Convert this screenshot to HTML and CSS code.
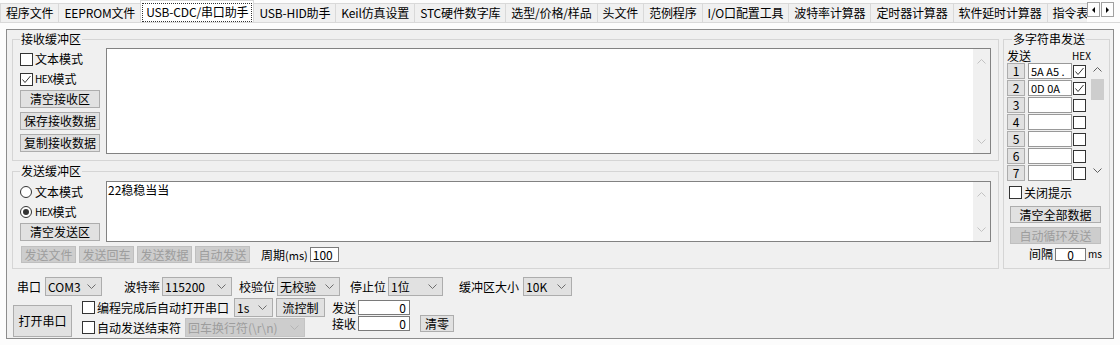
FILE: index.html
```html
<!DOCTYPE html>
<html lang="zh-CN">
<head>
	<meta charset="UTF-8">
	<title>USB-CDC/串口助手</title>
	<link rel="stylesheet" href="styles.css">
</head>
<body>
	<svg class="defs" width="0" height="0">
		<symbol id="dn" viewBox="0 0 9 5"><path d="M.5 .5 4.5 4.5 8.5 .5" fill="none" stroke="currentColor"/></symbol>
		<symbol id="up" viewBox="0 0 9 5"><path d="M.5 4.5 4.5 .5 8.5 4.5" fill="none" stroke="currentColor"/></symbol>
		<symbol id="ck" viewBox="0 0 11 11"><path d="M1.5 5.5 4 8.5 9.5 2" fill="none" stroke="currentColor"/></symbol>
	</svg>

	<div class="tabbar">
		<ul class="tabs">
			<li>程序文件</li>
			<li>EEPROM文件</li>
			<li class="cur"><span>USB-CDC/串口助手</span></li>
			<li>USB-HID助手</li>
			<li>Keil仿真设置</li>
			<li>STC硬件数字库</li>
			<li>选型/价格/样品</li>
			<li>头文件</li>
			<li>范例程序</li>
			<li>I/O口配置工具</li>
			<li>波特率计算器</li>
			<li>定时器计算器</li>
			<li>软件延时计算器</li>
			<li>指令表</li>
		</ul>
		<div class="spin"><span class="sl"></span><span class="sr"></span></div>
	</div>

	<div class="page">
		<div class="panel">
			<div class="upper">
				<div class="bufs">
					<fieldset class="grp recv">
						<legend>接收缓冲区</legend>
						<div class="gbody">
							<div class="side">
								<label class="chk"><i class="box"></i>文本模式</label>
								<label class="chk"><i class="box"><svg><use href="#ck"/></svg></i><span class="lat">HEX</span>模式</label>
								<button class="btn">清空接收区</button>
								<button class="btn">保存接收数据</button>
								<button class="btn">复制接收数据</button>
							</div>
							<div class="edit rx">
								<div class="txt"></div>
								<div class="vbar"><svg><use href="#up"/></svg><svg><use href="#dn"/></svg></div>
							</div>
						</div>
					</fieldset>

					<fieldset class="grp send">
						<legend>发送缓冲区</legend>
						<div class="gbody">
							<div class="side">
								<label class="chk"><i class="radio"></i>文本模式</label>
								<label class="chk"><i class="radio on"></i><span class="lat">HEX</span>模式</label>
								<button class="btn">清空发送区</button>
							</div>
							<div class="edit tx">
								<div class="txt">22稳稳当当</div>
								<div class="vbar"><svg><use href="#up"/></svg><svg><use href="#dn"/></svg></div>
							</div>
						</div>
						<div class="sendrow">
							<button class="btn off">发送文件</button>
							<button class="btn off">发送回车</button>
							<button class="btn off">发送数据</button>
							<button class="btn off">自动发送</button>
							<span class="period">周期<small>(ms)</small></span>
							<span class="ipt cyc">100</span>
						</div>
					</fieldset>
				</div>

				<fieldset class="grp multi">
					<legend>多字符串发送</legend>
					<div class="mhead"><span>发送</span><span class="hex">HEX</span></div>
					<div class="mlist">
						<div class="mrows">
							<div class="mrow"><button class="num">1</button><span class="mval">5A A5 .</span><i class="box"><svg><use href="#ck"/></svg></i></div>
							<div class="mrow"><button class="num">2</button><span class="mval">0D 0A</span><i class="box"><svg><use href="#ck"/></svg></i></div>
							<div class="mrow"><button class="num">3</button><span class="mval"></span><i class="box"></i></div>
							<div class="mrow"><button class="num">4</button><span class="mval"></span><i class="box"></i></div>
							<div class="mrow"><button class="num">5</button><span class="mval"></span><i class="box"></i></div>
							<div class="mrow"><button class="num">6</button><span class="mval"></span><i class="box"></i></div>
							<div class="mrow"><button class="num">7</button><span class="mval"></span><i class="box"></i></div>
						</div>
						<div class="mscroll">
							<svg><use href="#up"/></svg>
							<span class="thumb"></span>
							<svg><use href="#dn"/></svg>
						</div>
					</div>
					<label class="chk close"><i class="box"></i>关闭提示</label>
					<button class="btn wide">清空全部数据</button>
					<button class="btn wide off">自动循环发送</button>
					<div class="interval">间隔<span class="ipt gap-ipt">0</span><small>ms</small></div>
				</fieldset>
			</div>

			<div class="port">
				<div class="prow">
					<span>串口</span><span class="sel s-com">COM3<svg><use href="#dn"/></svg></span>
					<span class="lb-baud">波特率</span><span class="sel s-baud">115200<svg><use href="#dn"/></svg></span>
					<span class="lb-par">校验位</span><span class="sel s-par">无校验<svg><use href="#dn"/></svg></span>
					<span class="lb-stop">停止位</span><span class="sel s-stop">1位<svg><use href="#dn"/></svg></span>
					<span class="lb-buf">缓冲区大小</span><span class="sel s-buf">10K<svg><use href="#dn"/></svg></span>
				</div>
				<div class="pmain">
					<button class="btn open">打开串口</button>
					<div class="opts">
						<div class="ln">
							<label class="chk"><i class="box"></i>编程完成后自动打开串口</label>
							<span class="sel s-delay">1s<svg><use href="#dn"/></svg></span>
							<button class="btn flow">流控制</button>
						</div>
						<div class="ln">
							<label class="chk"><i class="box"></i>自动发送结束符</label>
							<span class="sel off s-eol">回车换行符(\r\n)<svg><use href="#dn"/></svg></span>
						</div>
					</div>
					<div class="cnt">
						<div class="c1">发送<span class="ipt ctr">0</span></div>
						<div class="c2">接收<span class="ipt ctr">0</span><button class="btn zero">清零</button></div>
					</div>
				</div>
			</div>
		</div>
	</div>
</body>
</html>
```

FILE: styles.css
```css
*{
	margin: 0;
	padding: 0;
	box-sizing: border-box;
}
body{
	width: 1120px;
	height: 345px;
	overflow: hidden;
	background: #fcfcfc;
	color: #000;
	font: 12px/14px "Noto Sans CJK SC", "Noto Sans", sans-serif;
}
button{
	font: inherit;
	color: inherit;
}
.defs{
	position: absolute;
	width: 0;
	height: 0;
}

/* tab strip */
.tabbar{
	display: flex;
	height: 22px;
}
.tabs{
	list-style: none;
	display: flex;
	align-items: flex-end;
	width: 1087px;
	overflow: hidden;
}
.tabs li{
	flex: none;
	height: 19px;
	padding: 2px 5px 0;
	background: #f0f0f0;
	border: 1px solid #d9d9d9;
	border-width: 1px 1px 0 0;
	white-space: nowrap;
	letter-spacing: -.15px;
}
.tabs li:first-child{
	border-left-width: 1px;
}
.tabs li.cur{
	height: 22px;
	padding: 3px 2px 0;
	margin-left: -1px;
	border-left-width: 1px;
	background: #fff;
}
.tabs li.cur span{
	display: block;
	padding: 1px 3px 2px;
	outline: 1px dotted #333;
}
.spin{
	display: flex;
	gap: 1px;
	height: 15px;
	margin-top: 2px;
}
.spin span{
	width: 13px;
	border: 1px solid #a0a0a0;
	background: #fdfdfd;
	display: flex;
	align-items: center;
	justify-content: center;
}
.spin span::before{
	content: "";
	border: 3px solid transparent;
}
.spin .sl::before{
	border-right-color: #000;
	border-left-width: 0;
}
.spin .sr::before{
	border-left-color: #000;
	border-right-width: 0;
}

/* main panel */
.page{
	border-top: 1px solid #d9d9d9;
	padding: 6px 0 0 6px;
}
.panel{
	width: 1108px;
	height: 310px;
	border: 1px solid #8c8c8c;
	background: #f0f0f0;
	padding: 2px 3px 0 5px;
}
.upper{
	display: flex;
	gap: 4px;
}
.bufs{
	flex: 1;
}
.grp{
	border: 1px solid #d5d5d5;
	min-width: 0;
}
.grp legend{
	padding: 0 1px;
	line-height: 14px;
}
.recv{
	padding: 2px 7px 6px;
}
.send{
	margin-top: 3px;
	padding: 3px 7px 5px;
}
.gbody{
	display: flex;
	gap: 6px;
}
.side{
	width: 80px;
	flex: none;
	padding-top: 1px;
}
.chk{
	display: flex;
	align-items: center;
	height: 20px;
	white-space: nowrap;
}
.lat{
	font-size: 10px;
	letter-spacing: -.5px;
}
.box{
	width: 13px;
	height: 13px;
	flex: none;
	margin-right: 2px;
	border: 1px solid #333;
	background: #fff;
	color: #333;
	display: flex;
}
.box svg{
	width: 11px;
	height: 11px;
}
.radio{
	width: 12px;
	height: 12px;
	flex: none;
	margin-right: 3px;
	border: 1px solid #333;
	border-radius: 50%;
	background: #fff;
	display: flex;
	align-items: center;
	justify-content: center;
}
.radio.on::after{
	content: "";
	width: 6px;
	height: 6px;
	border-radius: 50%;
	background: #333;
}
.btn{
	display: block;
	height: 18px;
	padding: 0;
	border: 1px solid #adadad;
	background: #e1e1e1;
	line-height: 16px;
	text-align: center;
	white-space: nowrap;
}
.btn.off{
	background: #cdcdcd;
	border-color: #bfbfbf;
	color: #9d9d9d;
}
.side .btn{
	width: 80px;
	margin-top: 1px;
}
.side .btn + .btn{
	margin-top: 4px;
}
.edit{
	flex: 1;
	display: flex;
	border: 1px solid #828282;
	background: #fff;
}
.rx{
	height: 106px;
}
.tx{
	height: 61px;
}
.txt{
	flex: 1;
	padding: 1px 1px;
}
.vbar{
	width: 17px;
	padding: 10px 0 9px;
	background: #f0f0f0;
	color: #c2c2c2;
	display: flex;
	flex-direction: column;
	justify-content: space-between;
	align-items: center;
}
.vbar svg, .mscroll svg, .sel svg{
	width: 9px;
	height: 5px;
	flex: none;
}
.sendrow{
	display: flex;
	align-items: center;
	height: 17px;
	margin-top: 4px;
	padding-left: 1px;
}
.sendrow .btn{
	width: 55px;
	height: 17px;
	line-height: 15px;
	margin-right: 3px;
}
.period{
	margin-left: 8px;
}
.period small{
	font-size: 11px;
}
.ipt{
	display: block;
	height: 15px;
	padding: 0 2px;
	border: 1px solid #7a7a7a;
	background: #fff;
	line-height: 13px;
}
.cyc{
	width: 29px;
	margin-left: 2px;
}

/* multi string */
.multi{
	width: 107px;
	flex: none;
	padding: 1px 3px 0;
}
.multi legend{
	margin-left: 5px;
}
.mhead{
	display: flex;
	justify-content: space-between;
	height: 16px;
	padding: 3px 15px 0 0;
	line-height: 12px;
}
.mhead .hex{
	font-size: 10px;
}
.mlist{
	display: flex;
	gap: 2px;
}
.mrows{
	display: flex;
	flex-direction: column;
	gap: 1px;
}
.mrow{
	display: flex;
	align-items: center;
	height: 16px;
}
.num{
	width: 18px;
	height: 16px;
	padding: 0;
	border: 1px solid #adadad;
	background: #e1e1e1;
	line-height: 14px;
}
.mval{
	width: 44px;
	height: 16px;
	margin: 0 1px 0 3px;
	padding-left: 2px;
	border: 1px solid #999;
	background: #fff;
	font-size: 11px;
	line-height: 14px;
	white-space: nowrap;
	overflow: hidden;
}
.mscroll{
	width: 15px;
	height: 118px;
	display: flex;
	flex-direction: column;
	align-items: center;
	color: #606060;
}
.mscroll svg{
	margin-top: 4px;
}
.thumb{
	width: 13px;
	height: 21px;
	margin-top: 7px;
	background: #cdcdcd;
}
.mscroll svg:last-child{
	margin-top: auto;
	margin-bottom: 8px;
}
.close{
	height: 17px;
	margin-top: 3px;
	padding-left: 2px;
}
.wide{
	width: 91px;
	height: 17px;
	margin: 5px 0 0 3px;
	line-height: 15px;
}
.wide + .wide{
	margin-top: 4px;
}
.interval{
	display: flex;
	align-items: center;
	justify-content: flex-end;
	height: 14px;
	margin-top: 3px;
	padding-right: 4px;
}
.gap-ipt{
	width: 31px;
	height: 13px;
	margin: 0 2px;
	line-height: 11px;
	text-align: center;
}
.interval small{
	font-size: 10px;
}

/* serial port */
.port{
	padding: 8px 0 0 1px;
}
.prow{
	display: flex;
	align-items: center;
	height: 19px;
	padding-left: 4px;
}
.sel{
	display: flex;
	align-items: center;
	justify-content: space-between;
	height: 19px;
	margin-left: 2px;
	padding: 0 5px 0 2px;
	border: 1px solid #adadad;
	background: #e1e1e1;
	white-space: nowrap;
}
.sel svg{
	color: #6d6d6d;
}
.sel.off{
	background: #cdcdcd;
	border-color: #c4c4c4;
	color: #9d9d9d;
}
.sel.off svg{
	color: #b5b5b5;
}
.s-com{
	width: 57px;
	margin-left: 4px;
}
.lb-baud{
	margin-left: 22px;
}
.s-baud{
	width: 70px;
}
.lb-par{
	margin-left: 7px;
}
.s-par{
	width: 63px;
}
.lb-stop{
	margin-left: 10px;
}
.s-stop{
	width: 55px;
}
.lb-buf{
	margin-left: 16px;
}
.s-buf{
	width: 49px;
	margin-left: 4px;
}
.pmain{
	display: flex;
	margin-top: 1px;
}
.open{
	width: 59px;
	height: 32px;
	margin-top: 8px;
	line-height: 30px;
}
.opts{
	display: flex;
	flex-direction: column;
	gap: 1px;
	margin: 1px 0 0 10px;
}
.ln{
	display: flex;
	align-items: center;
	height: 19px;
}
.s-delay{
	width: 39px;
	margin-left: 5px;
}
.flow{
	width: 49px;
	height: 19px;
	margin-left: 3px;
	line-height: 17px;
}
.s-eol{
	width: 120px;
	margin-left: 4px;
}
.cnt{
	margin-left: 7px;
	padding-top: 3px;
}
.c1, .c2{
	display: flex;
	align-items: center;
}
.c1{
	height: 15px;
}
.c2{
	height: 17px;
}
.ctr{
	width: 52px;
	height: 15px;
	margin-left: 2px;
	padding-right: 3px;
	text-align: right;
}
.zero{
	width: 34px;
	height: 17px;
	margin-left: 10px;
	line-height: 15px;
}
```
